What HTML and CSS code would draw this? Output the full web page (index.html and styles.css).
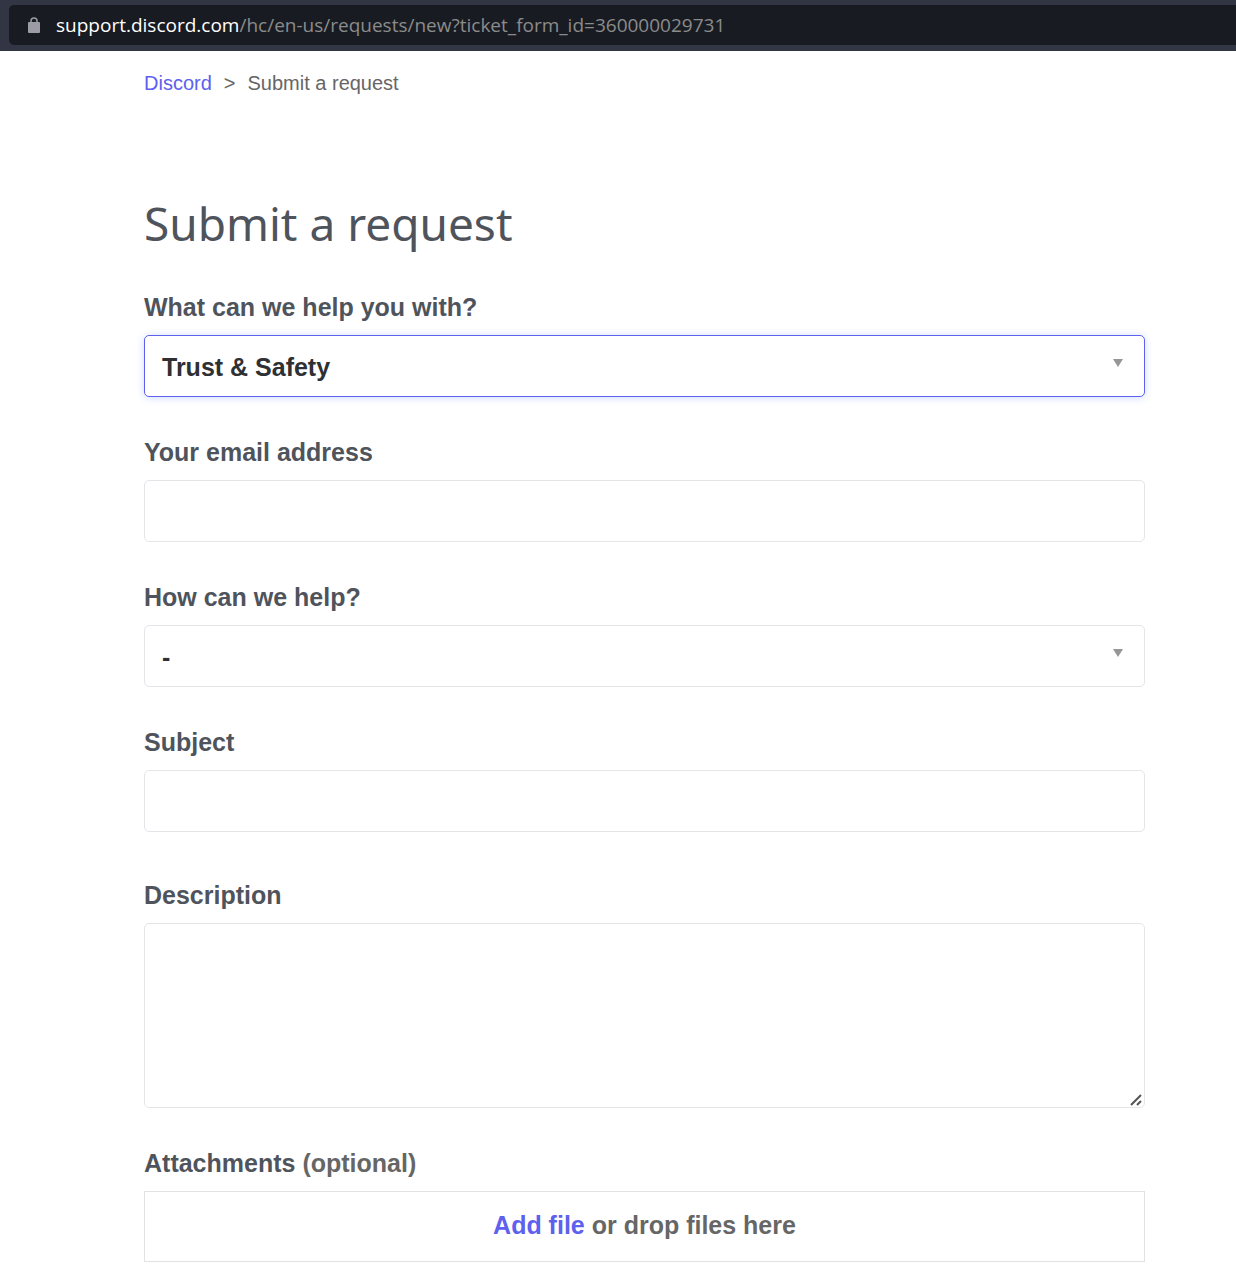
FILE: index.html
```html
<!DOCTYPE html>
<html lang="en-US">
<head>
<meta charset="utf-8">
<meta name="viewport" content="width=device-width, initial-scale=1">
<title>Submit a request – Discord</title>
<link rel="stylesheet" href="styles.css">
</head>
<body>
<header class="toolbar">
  <div class="address">
    <svg class="lock" viewBox="0 0 12 16" aria-hidden="true">
      <path class="lock-shackle" d="M3 7V4a3 3 0 0 1 6 0v3"/>
      <rect class="lock-body" x="0" y="5" width="12" height="11" rx="1"/>
    </svg>
    <span class="url"><span class="host">support.discord.com</span>/hc/en-us/requests/new?ticket_form_id=360000029731</span>
  </div>
</header>
<main class="page">
  <nav aria-label="Breadcrumb">
    <ol class="breadcrumbs">
      <li><a href="#">Discord</a></li>
      <li>Submit a request</li>
    </ol>
  </nav>
  <h1 class="title">Submit a request</h1>
  <form class="form">
    <div class="field">
      <label for="topic">What can we help you with?</label>
      <div class="select active">
        <select id="topic" class="control"><option>Trust &amp; Safety</option></select>
        <svg class="arrow" viewBox="0 0 10 8" aria-hidden="true"><path d="M0 0h10L5 8z"/></svg>
      </div>
    </div>
    <div class="field">
      <label for="email">Your email address</label>
      <input id="email" class="control" type="email">
    </div>
    <div class="field">
      <label for="reason">How can we help?</label>
      <div class="select">
        <select id="reason" class="control"><option>-</option></select>
        <svg class="arrow" viewBox="0 0 10 8" aria-hidden="true"><path d="M0 0h10L5 8z"/></svg>
      </div>
    </div>
    <div class="field">
      <label for="subject">Subject</label>
      <input id="subject" class="control" type="text">
    </div>
    <div class="field field-description">
      <label for="description">Description</label>
      <div class="textarea">
        <textarea id="description" class="control"></textarea>
        <svg class="grip" viewBox="0 0 12 12" aria-hidden="true"><path d="M1 11L11 1M7 11l4-4"/></svg>
      </div>
    </div>
    <div class="field">
      <label for="files">Attachments <span class="optional">(optional)</span></label>
      <div class="dropzone">
        <input id="files" class="file-input" type="file" multiple>
        <a href="#">Add file</a> or drop files here
      </div>
    </div>
  </form>
</main>
</body>
</html>
```
FILE: styles.css
```css
* {
  box-sizing: border-box;
}

body {
  margin: 0;
  background: #fff;
  color: #666;
  font-family: "Liberation Sans", Arial, sans-serif;
}

a {
  color: #5e60ee;
  text-decoration: none;
}

.toolbar {
  padding: 5px 0 6px 9px;
  background: #323544;
}

.address {
  display: flex;
  align-items: center;
  gap: 16px;
  height: 40px;
  padding-left: 19px;
  border-radius: 5px 0 0 5px;
  background: #181b22;
}

.lock {
  width: 12px;
  height: 16px;
}

.lock-shackle {
  fill: none;
  stroke: #9b9ca5;
  stroke-width: 1.5;
}

.lock-body {
  fill: #9b9ca5;
}

.url {
  color: #8b8b8b;
  font: 19px/24px "Open Sans", sans-serif;
  white-space: nowrap;
}

.host {
  color: #fff;
}

.page {
  padding: 20px 91px 4px 144px;
}

.breadcrumbs {
  display: flex;
  margin: 0;
  padding: 0;
  list-style: none;
  font-size: 20px;
  line-height: 24px;
}

.breadcrumbs li + li::before {
  content: ">";
  margin: 0 12px;
}

.title {
  margin: 95px 0 36px;
  color: #4f545c;
  font: 400 46px/66px "Noto Sans", sans-serif;
}

.form {
  display: flex;
  flex-direction: column;
  gap: 40px;
}

.field {
  display: flex;
  flex-direction: column;
  gap: 13px;
}

.field-description {
  margin-top: 8px;
}

.field label {
  color: #4f545c;
  font-size: 25px;
  font-weight: 700;
  line-height: 30px;
}

.field .optional {
  color: #666;
}

.control {
  display: block;
  width: 100%;
  height: 62px;
  margin: 0;
  padding: 2px 17px 0;
  border: 1px solid #e3e5e8;
  border-radius: 5px;
  outline: none;
  appearance: none;
  background: #fff;
  color: #2e3033;
  font: 700 25px/30px "Liberation Sans", Arial, sans-serif;
}

.control:focus,
.active .control {
  border-color: #5e60ee;
  box-shadow: 0 1px 8px #cfdcff;
}

.select,
.textarea {
  position: relative;
}

.arrow {
  position: absolute;
  top: 24px;
  right: 22px;
  width: 10px;
  height: 8px;
  fill: #969696;
  pointer-events: none;
}

.textarea .control {
  height: 185px;
  resize: none;
}

.grip {
  position: absolute;
  right: 3px;
  bottom: 2px;
  width: 12px;
  height: 12px;
  fill: none;
  stroke: #555;
  stroke-width: 2;
  pointer-events: none;
}

.dropzone {
  position: relative;
  padding: 18px 16px 21px;
  border: 1px solid #e0e2e4;
  font-size: 25px;
  font-weight: 700;
  line-height: 30px;
  text-align: center;
}

.file-input {
  position: absolute;
  inset: 0;
  width: 100%;
  opacity: 0;
}
```
